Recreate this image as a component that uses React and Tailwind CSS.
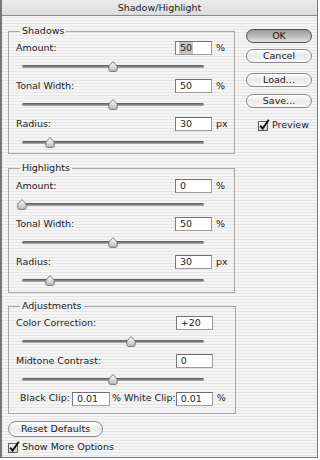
const stripes =
  "bg-[repeating-linear-gradient(180deg,#f5f5f5_0px,#f5f5f5_2px,#e6e6e6_2px,#e6e6e6_3px)]";

function Thumb() {
  return (
    <svg width="10" height="11" viewBox="0 0 10 11">
      <defs>
        <linearGradient id="thumbFill" x1="0" y1="0" x2="0" y2="1">
          <stop offset="0" stopColor="#ffffff" />
          <stop offset="1" stopColor="#b9b9b9" />
        </linearGradient>
      </defs>
      <path
        d="M5 0.6 L9.2 5 L9.2 8.6 Q9.2 10.4 7.4 10.4 L2.6 10.4 Q0.8 10.4 0.8 8.6 L0.8 5 Z"
        fill="url(#thumbFill)"
        stroke="#6b6b6b"
        strokeWidth="0.9"
      />
    </svg>
  );
}

function Slider({ pos }) {
  return (
    <div className="relative ml-[6px] mt-[3px] flex h-[16px] w-[182px] items-center">
      <div className="h-[3px] w-full rounded-full bg-gradient-to-b from-[#555555] to-[#b0b0b0]" />
      <div className="absolute top-[3px]" style={{ left: `calc(${pos}% - 5px)` }}>
        <Thumb />
      </div>
    </div>
  );
}

function Input({ value, selected, w = "w-[37px]" }) {
  return (
    <div
      className={`${w} flex h-[14px] items-center border border-[#9a9a9a] border-t-[#6f6f6f] border-l-[#7a7a7a] bg-white pl-[3px] leading-none`}
    >
      <span className={selected ? "bg-[#c6c6c6] px-[1px] py-[1px]" : "px-[1px]"}>{value}</span>
    </div>
  );
}

function Field({ label, value, unit, pos, selected, first }) {
  return (
    <div className={first ? "" : "mt-[5px]"}>
      <div className="flex h-[14px] items-center">
        <span className="flex-1">{label}</span>
        <Input value={value} selected={selected} />
        <span className="w-[22px] pl-[4px]">{unit}</span>
      </div>
      <Slider pos={pos} />
    </div>
  );
}

function Group({ title, className, children }) {
  return (
    <fieldset className={`border border-[#a5a5a5] pl-[7px] ${className}`}>
      <legend className="ml-[4px] px-[2px] leading-[12px]">{title}</legend>
      {children}
    </fieldset>
  );
}

function Button({ label, primary, className = "" }) {
  const look = primary
    ? "border-[#4e4e4e] bg-gradient-to-b from-[#9a9a9a] via-[#b9b9b9] to-[#e2e2e2]"
    : "border-[#8a8a8a] bg-gradient-to-b from-[#ffffff] via-[#e9e9e9] to-[#fafafa]";
  return (
    <div
      className={`flex items-center justify-center rounded-full border text-[#1a1a1a] ${look} ${className}`}
    >
      {label}
    </div>
  );
}

function Checkbox({ label, className = "" }) {
  return (
    <div className={`flex items-center ${className}`}>
      <svg width="12" height="12" viewBox="0 0 12 12">
        <defs>
          <linearGradient id="boxFill" x1="0" y1="0" x2="0" y2="1">
            <stop offset="0" stopColor="#ffffff" />
            <stop offset="1" stopColor="#cfcfcf" />
          </linearGradient>
        </defs>
        <rect x="0.5" y="2.5" width="9" height="9" fill="url(#boxFill)" stroke="#5f5f5f" />
        <path d="M2.2 6.6 L4.6 9.6 L10.8 0.8" fill="none" stroke="#111111" strokeWidth="1.9" />
      </svg>
      <span className="ml-[2px]">{label}</span>
    </div>
  );
}

export default function App() {
  return (
    <div className="h-[460px] w-[320px] bg-white font-['DejaVu_Sans','Liberation_Sans',sans-serif] text-[9.5px] text-[#1c1c1c]">
      <div className={`flex h-[458px] w-[318px] flex-col border-b border-l-2 border-r border-[#777777] ${stripes}`}>
        {/* Title bar */}
        <div className="flex h-[16px] items-center justify-center border-b border-[#8a8a8a] bg-gradient-to-b from-[#ececec] to-[#dcdcdc] pt-[1px]">
          Shadow/Highlight
        </div>

        <div className="flex pl-[6px]">
          {/* Left column */}
          <div className="flex w-[227px] flex-col">
            <Group title="Shadows" className="mt-[9px] pb-[3px] pt-[4px]">
              <Field first label="Amount:" value="50" unit="%" pos={50} selected />
              <Field label="Tonal Width:" value="50" unit="%" pos={50} />
              <Field label="Radius:" value="30" unit="px" pos={15.5} />
            </Group>

            <Group title="Highlights" className="mt-[8px] pb-[4px] pt-[5px]">
              <Field first label="Amount:" value="0" unit="%" pos={0} />
              <Field label="Tonal Width:" value="50" unit="%" pos={50} />
              <Field label="Radius:" value="30" unit="px" pos={15.5} />
            </Group>

            <Group title="Adjustments" className="mt-[7px] pb-[7px] pt-[4px]">
              <Field first label="Color Correction:" value="+20" unit="" pos={60} />
              <Field label="Midtone Contrast:" value="0" unit="" pos={50} />
              <div className="mt-[4px] flex h-[15px] items-center whitespace-nowrap">
                <span className="pl-[4px] pr-[2px]">Black Clip:</span>
                <Input value="0.01" w="w-[38px]" />
                <span className="flex-1 pl-[2px]">% White Clip:</span>
                <Input value="0.01" />
                <span className="w-[22px] pl-[4px]">%</span>
              </div>
            </Group>

            <Button label="Reset Defaults" className="mt-[7px] h-[16px] w-[95px]" />
            <Checkbox label="Show More Options" className="mt-[4px] h-[12px]" />
          </div>

          {/* Right column */}
          <div className="ml-[11px] flex w-[66px] flex-col pt-[13px]">
            <Button primary label="OK" className="h-[14px]" />
            <Button label="Cancel" className="mt-[6px] h-[14px]" />
            <Button label="Load..." className="mt-[10px] h-[14px]" />
            <Button label="Save..." className="mt-[7px] h-[14px]" />
            <Checkbox label="Preview" className="ml-[12px] mt-[11px] h-[12px]" />
          </div>
        </div>
      </div>
    </div>
  );
}
